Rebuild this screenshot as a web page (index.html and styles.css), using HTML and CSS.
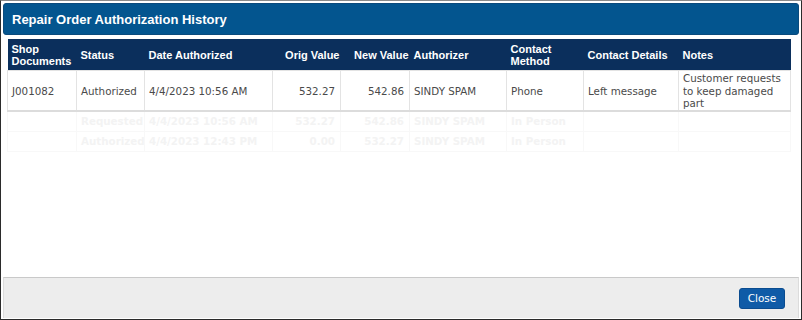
FILE: index.html
```html
<!DOCTYPE html>
<html lang="en">
<head>
    <meta charset="UTF-8">
    <meta name="viewport" content="width=device-width, initial-scale=1.0">
    <title>Repair Order Authorization History</title>
    <link rel="stylesheet" href="styles.css">
</head>
<body>
    <div class="dialog">
        <div class="dialog-title">Repair Order Authorization History</div>

        <div class="dialog-body">
            <table class="history">
                <colgroup>
                    <col style="width: 69px">
                    <col style="width: 68px">
                    <col style="width: 128px">
                    <col style="width: 68px">
                    <col style="width: 69px">
                    <col style="width: 97px">
                    <col style="width: 77px">
                    <col style="width: 95px">
                    <col style="width: 112px">
                </colgroup>
                <thead>
                    <tr>
                        <th>Shop Documents</th>
                        <th>Status</th>
                        <th>Date Authorized</th>
                        <th class="num">Orig Value</th>
                        <th class="num">New Value</th>
                        <th>Authorizer</th>
                        <th>Contact Method</th>
                        <th>Contact Details</th>
                        <th>Notes</th>
                    </tr>
                </thead>
                <tbody>
                    <tr class="row">
                        <td>J001082</td>
                        <td>Authorized</td>
                        <td>4/4/2023 10:56 AM</td>
                        <td class="num">532.27</td>
                        <td class="num">542.86</td>
                        <td>SINDY SPAM</td>
                        <td>Phone</td>
                        <td>Left message</td>
                        <td>Customer requests to keep damaged part</td>
                    </tr>
                </tbody>
                <!-- faded rows left over behind the list -->
                <tbody class="ghost">
                    <tr>
                        <td></td>
                        <td>Requested</td>
                        <td>4/4/2023 10:56 AM</td>
                        <td class="num">532.27</td>
                        <td class="num">542.86</td>
                        <td>SINDY SPAM</td>
                        <td>In Person</td>
                        <td></td>
                        <td></td>
                    </tr>
                    <tr>
                        <td></td>
                        <td>Authorized</td>
                        <td>4/4/2023 12:43 PM</td>
                        <td class="num">0.00</td>
                        <td class="num">532.27</td>
                        <td>SINDY SPAM</td>
                        <td>In Person</td>
                        <td></td>
                        <td></td>
                    </tr>
                </tbody>
            </table>
        </div>

        <div class="dialog-footer">
            <button type="button" class="btn-close">Close</button>
        </div>
    </div>
</body>
</html>
```

FILE: styles.css
```css
html, body {
    margin: 0;
    padding: 0;
    background: #fff;
}
.dialog {
    box-sizing: border-box;
    width: 802px;
    height: 320px;
    border: 1px solid #2b2b2b;
    border-top-color: #8a8a8a;
    padding: 2px 2px 1px;
    display: flex;
    flex-direction: column;
    background: #fff;
}
.dialog-title {
    box-sizing: border-box;
    height: 32px;
    padding: 0 8px;
    display: flex;
    align-items: center;
    background-color: #03558f;
    border: 1px solid #0a4a7c;
    border-radius: 3px;
    color: #fff;
    font-family: "Liberation Sans", Arial, sans-serif;
    font-weight: bold;
    font-size: 13px;
}
.dialog-body {
    flex: 1;
    padding: 4px 4px 0;
}
.history {
    width: 783px;
    table-layout: fixed;
    border-collapse: collapse;
    font-family: "DejaVu Sans", Verdana, sans-serif;
    font-size: 10.3px;
    color: #4a4a4a;
}
.history th {
    height: 31px;
    padding: 0 4px;
    background-color: #0b2f5c;
    color: #fff;
    font-family: "Liberation Sans", Arial, sans-serif;
    font-weight: bold;
    font-size: 11px;
    line-height: 12px;
    text-align: left;
    vertical-align: middle;
}
.history th.num {
    text-align: right;
    padding-right: 1px;
}
.history .row td {
    height: 36px;
    padding: 1px 4px 0;
    border: 1px solid #e3e3e3;
    border-bottom: 2px solid #dcdcdc;
    line-height: 12.5px;
    vertical-align: middle;
}
.history td.num {
    text-align: right;
    padding-right: 5px;
}
.history .ghost td {
    height: 19px;
    padding: 0 4px;
    border: 1px solid #f8f8f8;
    color: #f3f3f3;
    font-weight: bold;
    white-space: nowrap;
    overflow: hidden;
}
.history .ghost td.num {
    padding-right: 5px;
}
.dialog-footer {
    box-sizing: border-box;
    height: 41px;
    padding: 0 13px;
    display: flex;
    align-items: center;
    justify-content: flex-end;
    background-color: #ededed;
    border-top: 1px solid #c9c9c9;
    border-left: 1px solid #dcdcdc;
    border-right: 1px solid #dcdcdc;
}
.btn-close {
    box-sizing: border-box;
    width: 46px;
    height: 21px;
    padding: 0;
    border: 1px solid #0a4c90;
    border-radius: 3px;
    background-color: #0f5ba7;
    color: #fff;
    font-family: "DejaVu Sans", Verdana, sans-serif;
    font-size: 10.5px;
    cursor: pointer;
}
.btn-close:hover {
    background-color: #0a4c90;
}
```
